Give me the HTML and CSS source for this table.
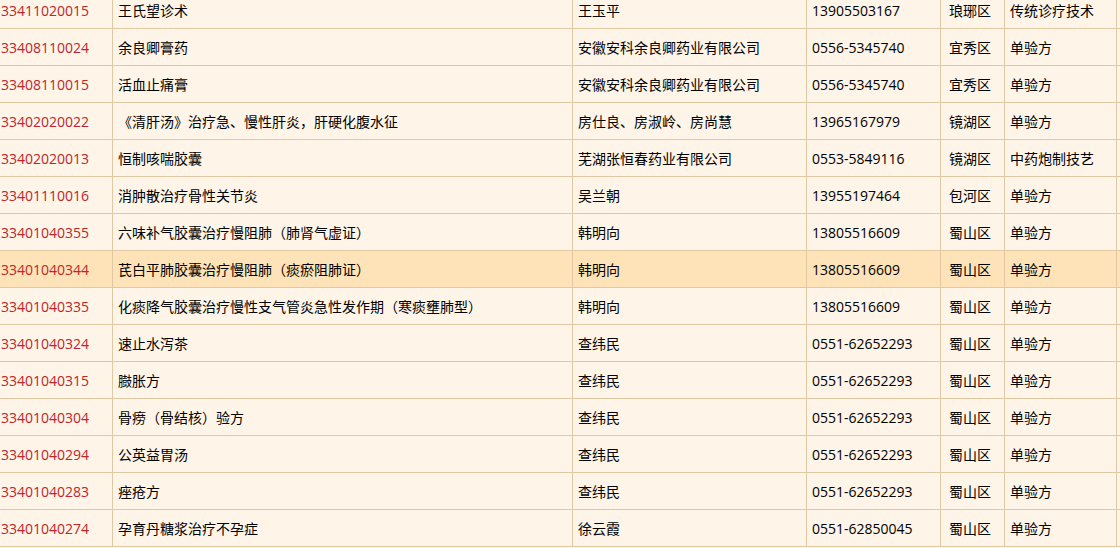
FILE: index.html
```html
<!DOCTYPE html>
<html lang="zh-CN">
<head>
<meta charset="utf-8">
<title>项目列表</title>
<link rel="stylesheet" href="styles.css">
</head>
<body>
<div class="list">
  <div class="row"><div class="c code">33411020015</div><div class="c">王氏望诊术</div><div class="c">王玉平</div><div class="c">13905503167</div><div class="c area">琅琊区</div><div class="c">传统诊疗技术</div><div class="c"></div></div>
  <div class="row"><div class="c code">33408110024</div><div class="c">余良卿膏药</div><div class="c">安徽安科余良卿药业有限公司</div><div class="c">0556-5345740</div><div class="c area">宜秀区</div><div class="c">单验方</div><div class="c"></div></div>
  <div class="row"><div class="c code">33408110015</div><div class="c">活血止痛膏</div><div class="c">安徽安科余良卿药业有限公司</div><div class="c">0556-5345740</div><div class="c area">宜秀区</div><div class="c">单验方</div><div class="c"></div></div>
  <div class="row"><div class="c code">33402020022</div><div class="c">《清肝汤》治疗急、慢性肝炎，肝硬化腹水征</div><div class="c">房仕良、房淑岭、房尚慧</div><div class="c">13965167979</div><div class="c area">镜湖区</div><div class="c">单验方</div><div class="c"></div></div>
  <div class="row"><div class="c code">33402020013</div><div class="c">恒制咳喘胶囊</div><div class="c">芜湖张恒春药业有限公司</div><div class="c">0553-5849116</div><div class="c area">镜湖区</div><div class="c">中药炮制技艺</div><div class="c"></div></div>
  <div class="row"><div class="c code">33401110016</div><div class="c">消肿散治疗骨性关节炎</div><div class="c">吴兰朝</div><div class="c">13955197464</div><div class="c area">包河区</div><div class="c">单验方</div><div class="c"></div></div>
  <div class="row"><div class="c code">33401040355</div><div class="c">六味补气胶囊治疗慢阻肺（肺肾气虚证）</div><div class="c">韩明向</div><div class="c">13805516609</div><div class="c area">蜀山区</div><div class="c">单验方</div><div class="c"></div></div>
  <div class="row active"><div class="c code">33401040344</div><div class="c">芪白平肺胶囊治疗慢阻肺（痰瘀阻肺证）</div><div class="c">韩明向</div><div class="c">13805516609</div><div class="c area">蜀山区</div><div class="c">单验方</div><div class="c"></div></div>
  <div class="row"><div class="c code">33401040335</div><div class="c">化痰降气胶囊治疗慢性支气管炎急性发作期（寒痰壅肺型）</div><div class="c">韩明向</div><div class="c">13805516609</div><div class="c area">蜀山区</div><div class="c">单验方</div><div class="c"></div></div>
  <div class="row"><div class="c code">33401040324</div><div class="c">速止水泻茶</div><div class="c">查纬民</div><div class="c">0551-62652293</div><div class="c area">蜀山区</div><div class="c">单验方</div><div class="c"></div></div>
  <div class="row"><div class="c code">33401040315</div><div class="c">臌胀方</div><div class="c">查纬民</div><div class="c">0551-62652293</div><div class="c area">蜀山区</div><div class="c">单验方</div><div class="c"></div></div>
  <div class="row"><div class="c code">33401040304</div><div class="c">骨痨（骨结核）验方</div><div class="c">查纬民</div><div class="c">0551-62652293</div><div class="c area">蜀山区</div><div class="c">单验方</div><div class="c"></div></div>
  <div class="row"><div class="c code">33401040294</div><div class="c">公英益胃汤</div><div class="c">查纬民</div><div class="c">0551-62652293</div><div class="c area">蜀山区</div><div class="c">单验方</div><div class="c"></div></div>
  <div class="row"><div class="c code">33401040283</div><div class="c">痤疮方</div><div class="c">查纬民</div><div class="c">0551-62652293</div><div class="c area">蜀山区</div><div class="c">单验方</div><div class="c"></div></div>
  <div class="row"><div class="c code">33401040274</div><div class="c">孕育丹糖浆治疗不孕症</div><div class="c">徐云霞</div><div class="c">0551-62850045</div><div class="c area">蜀山区</div><div class="c">单验方</div><div class="c"></div></div>
</div>
</body>
</html>
```

FILE: styles.css
```css
html, body {
  margin: 0;
  padding: 0;
  background: #fef4e7;
  overflow: hidden;
}
body {
  font-family: "Open Sans", "Noto Sans CJK SC", sans-serif;
  font-size: 14px;
  color: #000;
  text-spacing-trim: space-all;
}
.list {
  margin-top: -8px;
  margin-left: -5px;
  width: 1300px;
}
.row {
  display: grid;
  grid-template-columns: 118px 460px 234px 134px 64px 112px 178px;
  height: 37px;
  background: #fef4e7;
}
.row.active {
  background: #fde3b7;
}
.c {
  box-sizing: border-box;
  height: 37px;
  line-height: 37px;
  padding: 0 5px;
  border-right: 1px solid #e0c8a2;
  border-bottom: 1px solid #e0c8a2;
  white-space: nowrap;
  overflow: hidden;
}
.c.code {
  padding-left: 6px;
  color: #c0252b;
}
.c.area {
  padding-left: 8px;
}
```
